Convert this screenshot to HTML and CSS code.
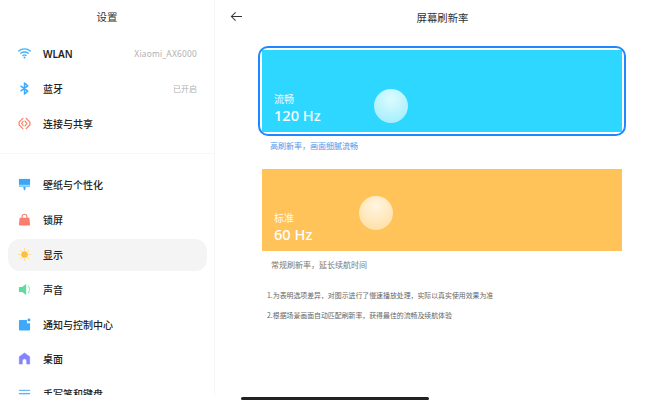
FILE: index.html
```html
<!DOCTYPE html>
<html lang="zh-CN">
<head>
<meta charset="utf-8">
<title>屏幕刷新率</title>
<link rel="stylesheet" href="styles.css">
</head>
<body>
<div class="app">
  <aside class="side">
    <h1 class="side-title">设置</h1>
    <ul class="group group-first">
      <li class="row">
        <svg class="ico" viewBox="0 0 14 14"><g fill="none" stroke="#3fb4fb" stroke-width="1.5" stroke-linecap="round"><path d="M.8 4.4C4.2 1.2 9.8 1.2 13.2 4.4"/><path d="M3 6.8C5.2 4.9 8.8 4.9 11 6.8"/><path d="M5.2 9.1C6.3 8.3 7.7 8.3 8.8 9.1"/></g><circle cx="7" cy="11.2" r="1.1" fill="#3fb4fb"/></svg>
        <span class="label latin">WLAN</span><span class="val">Xiaomi_AX6000</span>
      </li>
      <li class="row">
        <svg class="ico" viewBox="0 0 14 14"><path d="M2.8 4.2L10.5 9.8L7 13V1L10.5 4.2L2.8 9.8" fill="none" stroke="#3fa9fb" stroke-width="1.6" stroke-linejoin="round"/></svg>
        <span class="label">蓝牙</span><span class="val val-cn">已开启</span>
      </li>
      <li class="row">
        <svg class="ico" viewBox="0 0 14 14"><g fill="none" stroke="#f77f68" stroke-width="1.3" stroke-linecap="round" stroke-linejoin="round"><path d="M5.2 1.4L1.2 5.6V8.4L5.2 12.6"/><path d="M8.8 1.4L12.8 5.6V8.4L8.8 12.6"/><path d="M5.6 4.6L3.9 7L5.6 9.4"/><path d="M7.6 4.4L9.6 7L7.6 9.6"/></g></svg>
        <span class="label">连接与共享</span>
      </li>
    </ul>
    <ul class="group group-next">
      <li class="row">
        <svg class="ico" viewBox="0 0 14 14"><rect x="1" y="1" width="12" height="6.4" fill="#3aa6fa"/><rect x="1" y="7.8" width="12" height="1.8" fill="#7cc6fc"/><path d="M5.6 9.6H8.4L7.6 13.2H6.4Z" fill="#3aa6fa"/></svg>
        <span class="label">壁纸与个性化</span>
      </li>
      <li class="row">
        <svg class="ico" viewBox="0 0 14 14"><path d="M4.4 6V4a2.6 2.6 0 0 1 5.2 0V6" fill="none" stroke="#fb7d6d" stroke-width="1.2"/><path d="M1.8 5.2H12.2L13 12.4A1 1 0 0 1 12 13.4H2A1 1 0 0 1 1 12.4Z" fill="#fb7d6d"/></svg>
        <span class="label">锁屏</span>
      </li>
      <li class="row row-active">
        <svg class="ico" viewBox="0 0 14 14"><circle cx="7" cy="7" r="3.6" fill="#fdc03f"/><g stroke="#fdd785" stroke-width="1" stroke-linecap="round"><path d="M7 .6V2M7 12V13.4M.6 7H2M12 7H13.4M2.4 2.4L3.3 3.3M10.7 10.7L11.6 11.6M2.4 11.6L3.3 10.7M10.7 3.3L11.6 2.4"/></g></svg>
        <span class="label">显示</span>
      </li>
      <li class="row">
        <svg class="ico" viewBox="0 0 14 14"><path d="M1 4.4H4.4L8.8 1.2V12.8L4.4 9.6H1Z" fill="#5fdc9b"/><path d="M11 3C12.8 5.2 12.8 8.8 11 11" fill="none" stroke="#8be8b9" stroke-width="1.1"/></svg>
        <span class="label">声音</span>
      </li>
      <li class="row">
        <svg class="ico" viewBox="0 0 14 14"><path d="M2 2.2H9.6V5.6H13V12.4A1 1 0 0 1 12 13.4H2A1 1 0 0 1 1 12.4V3.2A1 1 0 0 1 2 2.2Z" fill="#3ea8fb"/><circle cx="11.8" cy="2.2" r="1.6" fill="#3ea8fb"/></svg>
        <span class="label">通知与控制中心</span>
      </li>
      <li class="row">
        <svg class="ico" viewBox="0 0 14 14"><path d="M7 1L12.6 5V13H9.4V9.8A2.4 2.4 0 0 0 4.6 9.8V13H1.4V5Z" fill="#8384fb" stroke="#8384fb" stroke-width=".6" stroke-linejoin="round"/></svg>
        <span class="label">桌面</span>
      </li>
      <li class="row">
        <svg class="ico" viewBox="0 0 14 14"><rect x="1" y="3" width="12" height="1.2" fill="#57b4fb"/><rect x="1" y="6.4" width="12" height="1.2" fill="#57b4fb"/><rect x="1" y="8.2" width="12" height="2.6" fill="#8ccbfc"/></svg>
        <span class="label">手写笔和键盘</span>
      </li>
    </ul>
  </aside>
  <main class="main">
    <header class="head">
      <svg class="back" viewBox="0 0 14 12"><path d="M13 6H1.4M6 1.4L1.4 6L6 10.6" fill="none" stroke="#333" stroke-width="1.1"/></svg>
      <h2 class="head-title">屏幕刷新率</h2>
    </header>
    <div class="content">
      <div class="selected">
        <div class="card card-blue">
          <div class="ball ball-blue"></div>
          <div class="card-name">流畅</div>
          <div class="card-hz">120 Hz</div>
        </div>
      </div>
      <p class="desc desc-on">高刷新率，画面细腻流畅</p>
      <div class="card card-orange">
        <div class="ball ball-orange"></div>
        <div class="card-name">标准</div>
        <div class="card-hz">60 Hz</div>
      </div>
      <p class="desc desc-off">常规刷新率，延长续航时间</p>
      <p class="note note-first">1.为表明选项差异，对图示进行了慢速播放处理，实际以真实使用效果为准</p>
      <p class="note note-second">2.根据场景画面自动匹配刷新率，获得最佳的流畅及续航体验</p>
    </div>
  </main>
  <div class="home-strip"><div class="home-bar"></div></div>
</div>
</body>
</html>
```
FILE: styles.css
```css
* { box-sizing: border-box; }
html, body { margin: 0; padding: 0; background: #fff; }
body {
  font-family: "Noto Sans CJK SC", "Noto Sans", sans-serif;
  color: #222;
}
.app {
  position: relative;
  display: flex;
  width: 670px;
  height: 404px;
  overflow: hidden;
  background: #fff;
}
.side {
  flex: 0 0 215px;
  height: 404px;
  border-right: 1px solid #f5f5f5;
  overflow: hidden;
}
.side-title {
  margin: 0;
  height: 34px;
  line-height: 34px;
  text-align: center;
  font-size: 10.5px;
  font-weight: 400;
  color: #333;
}
.group { list-style: none; margin: 0; padding: 0; }
.group-first { padding: 2.6px 0 12px; border-bottom: 1px solid #f7f7f7; height: 120px; }
.group-next { padding-top: 13.6px; }
.row {
  display: flex;
  align-items: center;
  height: 34.8px;
  margin: 0 7px 0 8px;
  padding: 0 10px;
  border-radius: 12px;
}
.row-active { background: #f4f4f4; height: 32px; margin-top: 1.4px; margin-bottom: 1.4px; }
.ico { width: 13px; height: 13px; flex: none; margin-right: 12px; }
.label { font-size: 10px; color: #222; font-weight: 500; }
.latin { font-family: "Noto Sans", sans-serif; font-weight: 600; font-size: 10px; }
.val { margin-left: auto; font-size: 8.3px; color: #b0b0b0; letter-spacing: .25px; font-family: "Noto Sans", sans-serif; }
.val-cn { font-family: "Noto Sans CJK SC", sans-serif; font-size: 8px; letter-spacing: 0; }
.main { flex: 1; min-width: 0; }
.head {
  position: relative;
  height: 34px;
  display: flex;
  align-items: center;
  justify-content: center;
}
.back { position: absolute; left: 15px; top: 11px; width: 13px; height: 11px; }
.head-title { margin: 0; font-size: 10.4px; font-weight: 400; color: #333; }
.content { padding: 12px 0 0 43px; }
.selected {
  width: 368px;
  height: 90px;
  padding: 2px;
  border: 2px solid #1f87ff;
  border-radius: 10px;
}
.card {
  position: relative;
  display: flex;
  flex-direction: column;
  justify-content: flex-end;
  width: 360px;
  height: 82px;
  padding: 0 0 8px 12px;
  color: #fff;
}
.card-blue { background: #2dd7ff; }
.card-orange { background: #ffc359; margin-left: 4px; }
.card-name { font-size: 10px; line-height: 14px; opacity: .95; }
.card-hz { font-family: "Noto Sans", sans-serif; font-size: 14.6px; line-height: 18px; font-weight: 500; }
.ball {
  position: absolute;
  width: 34px;
  height: 34px;
  border-radius: 50%;
}
.ball-blue {
  left: 112px;
  top: 39px;
  background: radial-gradient(circle at 50% 30%, #dcfbff 0%, #b4f2fd 60%, #9ceafc 100%);
}
.ball-orange {
  left: 97px;
  top: 27px;
  background: radial-gradient(circle at 50% 30%, #fff5e2 0%, #ffe6b6 60%, #fddc9c 100%);
}
.desc { margin: 0; font-size: 8px; line-height: 12px; }
.desc-on { color: #4c97ea; padding: 4px 0 0 12px; height: 33px; }
.desc-off { color: #777; padding: 8px 0 0 13px; height: 26px; }
.note { margin: 0; font-size: 6.9px; line-height: 10px; color: #666; padding-left: 9px; }
.note-first { padding-top: 13px; }
.note-second { padding-top: 10px; }
.home-strip {
  position: absolute;
  left: 0;
  right: 0;
  bottom: 0;
  height: 9px;
  padding: 2px 0 0 241px;
  background: #fff;
}
.home-bar {
  width: 188px;
  height: 3px;
  border-radius: 2px;
  background: #222;
}
```
